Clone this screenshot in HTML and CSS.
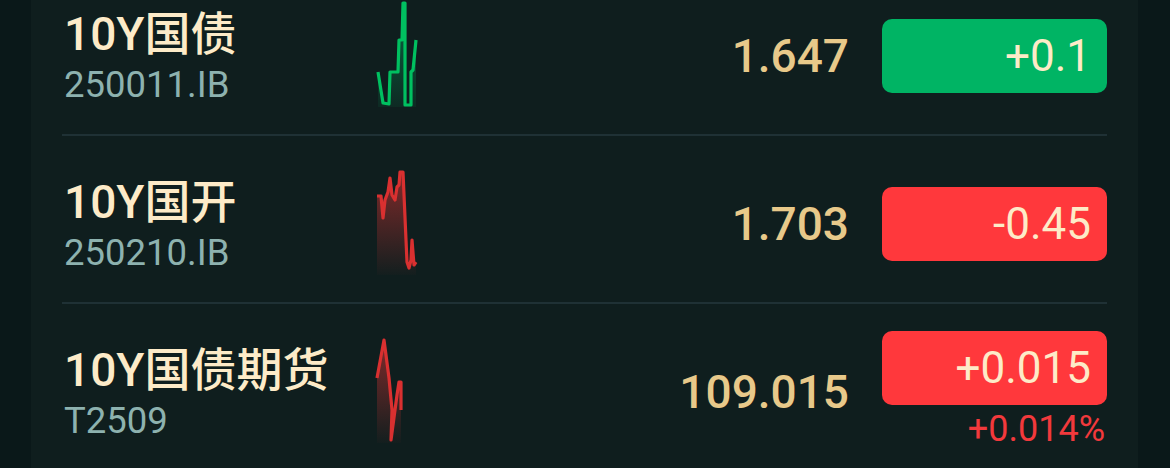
FILE: index.html
```html
<!DOCTYPE html>
<html>
<head>
    <link rel="stylesheet" href="styles.css">
</head>
<body>
    <div class="card">
        <ul class="quote-list">
            <li class="quote-row">
                <div class="quote-name">
                    <div class="quote-title">10Y国债</div>
                    <div class="quote-code">250011.IB</div>
                </div>
                <svg class="spark" width="50" height="110" viewBox="0 0 50 110">
                    <defs>
                        <linearGradient id="gUp" x1="0" y1="0" x2="0" y2="1">
                            <stop offset="0" stop-color="#00b464" stop-opacity="0.5"/>
                            <stop offset="1" stop-color="#00b464" stop-opacity="0.08"/>
                        </linearGradient>
                    </defs>
                    <path d="M5 71 L10 102 L16 103 L17 71 L25 71 L26 39 L29 39 L30 2 L32 2 L32 104 L38 104 L38 71 L40 69 L43 39 L43 106 L5 106 Z" fill="url(#gUp)"/>
                    <polyline points="5,71 10,102 16,103 17,71 25,71 26,39 29,39 30,2 32,2 32,104 38,104 38,71 40,69 43,39" fill="none" stroke="#00c060" stroke-width="3.2" stroke-linejoin="round"/>
                </svg>
                <div class="quote-price">1.647</div>
                <div class="quote-change">
                    <div class="badge badge-up">+0.1</div>
                </div>
            </li>
            <li class="quote-row">
                <div class="quote-name">
                    <div class="quote-title">10Y国开</div>
                    <div class="quote-code">250210.IB</div>
                </div>
                <svg class="spark" width="50" height="110" viewBox="0 0 50 110">
                    <defs>
                        <linearGradient id="gDown" x1="0" y1="0" x2="0" y2="1">
                            <stop offset="0" stop-color="#e03434" stop-opacity="0.55"/>
                            <stop offset="1" stop-color="#e03434" stop-opacity="0.02"/>
                        </linearGradient>
                    </defs>
                    <path d="M4 27 L8 27 L10 49 L12 31 L15 23 L17 9 L19 26 L22 31 L24 18 L26 16 L27 3 L30 3 L33 71 L34 93 L36 99 L38 91 L39 71 L41 96 L43 93 L43 106 L4 106 Z" fill="url(#gDown)"/>
                    <polyline points="4,27 8,27 10,49 12,31 15,23 17,9 19,26 22,31 24,18 26,16 27,3 30,3 33,71 34,93 36,99 38,91 39,71 41,96 43,93" fill="none" stroke="#d93030" stroke-width="3.2" stroke-linejoin="round"/>
                </svg>
                <div class="quote-price">1.703</div>
                <div class="quote-change">
                    <div class="badge badge-down">-0.45</div>
                </div>
            </li>
            <li class="quote-row">
                <div class="quote-name">
                    <div class="quote-title">10Y国债期货</div>
                    <div class="quote-code">T2509</div>
                </div>
                <svg class="spark" width="50" height="110" viewBox="0 0 50 110">
                    <defs>
                        <linearGradient id="gDown2" x1="0" y1="0" x2="0" y2="1">
                            <stop offset="0" stop-color="#e03434" stop-opacity="0.55"/>
                            <stop offset="1" stop-color="#e03434" stop-opacity="0.02"/>
                        </linearGradient>
                    </defs>
                    <path d="M4 41 L11 3 L16 41 L19 73 L18 103 L24 58 L26 45 L28 45 L28 73 L28 106 L4 106 Z" fill="url(#gDown2)"/>
                    <polyline points="4,41 11,3 16,41 19,73 18,103 24,58 26,45 28,45 28,73" fill="none" stroke="#d93030" stroke-width="3.2" stroke-linejoin="round"/>
                </svg>
                <div class="quote-price">109.015</div>
                <div class="quote-change">
                    <div class="badge badge-down">+0.015</div>
                    <div class="quote-pct">+0.014%</div>
                </div>
            </li>
        </ul>
    </div>
</body>
</html>
```

FILE: styles.css
```css
/* General Styles */
body {
    margin: 0;
    padding: 0;
    background-color: #0a1819;
    font-family: 'Roboto', 'Noto Sans CJK SC', sans-serif;
    overflow: hidden;
    height: 468px;
}

/* Card */
.card {
    margin: 0 32px 0 31px;
    padding: 0 31px;
    background-color: #0f1e1e;
    height: 468px;
    overflow: hidden;
}

.quote-list {
    list-style-type: none;
    margin: -32px 0 0 0;
    padding: 0;
}

/* Rows */
.quote-row {
    display: flex;
    align-items: center;
    height: 168px;
    padding-top: 10px;
    box-sizing: border-box;
    border-bottom: 2px solid #1f3135;
}

.quote-name {
    width: 309px;
    padding-left: 2px;
}

.quote-title {
    color: #fdebc8;
    font-size: 46px;
    font-weight: 500;
    line-height: 54px;
}

.quote-code {
    color: #8db2af;
    font-size: 36.5px;
    line-height: 42px;
    margin-top: 3px;
}

.spark {
    flex-shrink: 0;
}

.quote-price {
    flex: 1;
    text-align: right;
    margin-right: 33px;
    color: #e8c98a;
    font-size: 46px;
    font-weight: 500;
}

/* Change badges */
.quote-change {
    width: 225px;
    text-align: right;
}

.badge {
    height: 74px;
    line-height: 74px;
    padding-right: 16px;
    border-radius: 10px;
    color: #fdebc8;
    font-size: 44px;
}

.badge-up {
    background-color: #00b464;
}

.badge-down {
    background-color: #ff383c;
}

.quote-pct {
    color: #f2393c;
    font-size: 36px;
    line-height: 48px;
    padding-right: 2px;
}
```
